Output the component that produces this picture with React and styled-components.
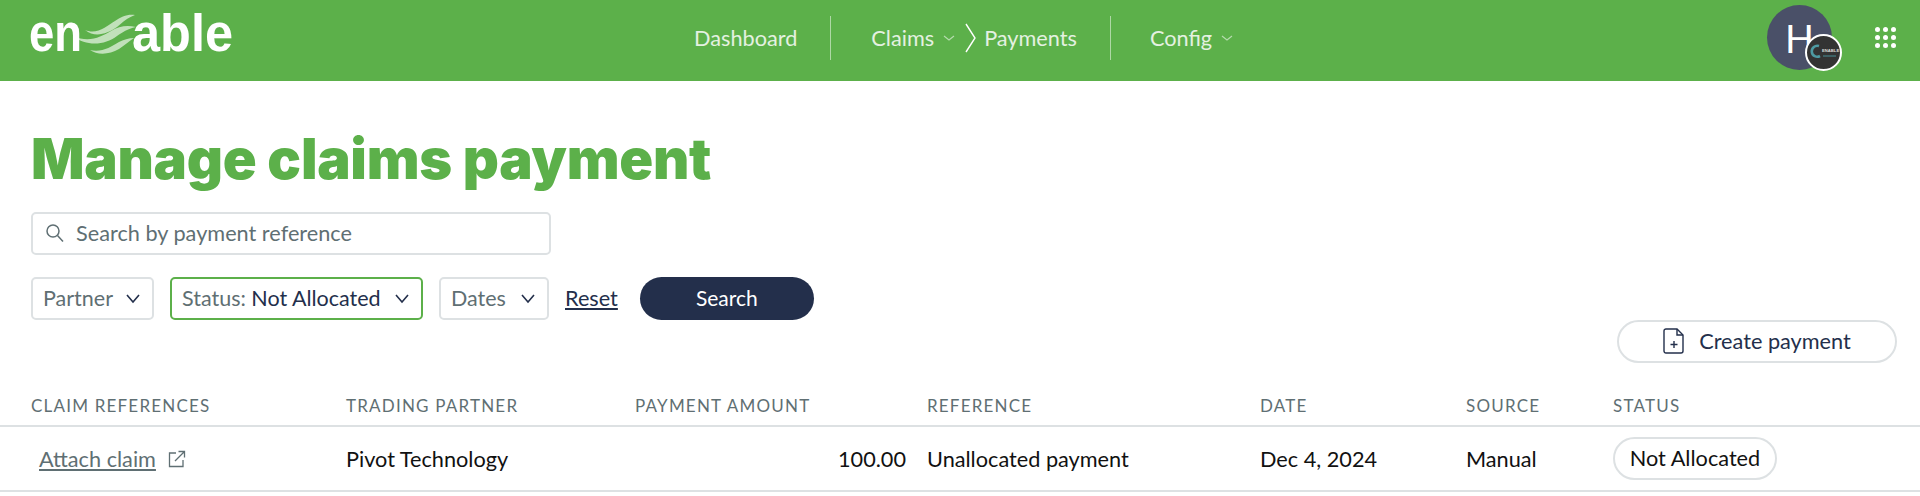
import React from 'react'
import styled, { createGlobalStyle } from 'styled-components'

const GREEN = '#5cb04a'
const NAVY = '#232f4b'
const LINE = '#dde1e3'
const GREY = '#5f6f73'

const Global = createGlobalStyle`
  html, body { margin: 0; padding: 0; background: #fff; }
  body { font-family: Lato, "Liberation Sans", sans-serif; overflow: hidden; }
`

const Header = styled.header`
  height: 81px;
  background: ${GREEN};
  display: flex;
  align-items: center;
  padding-left: 31px;
`
const Logo = styled.svg`
  width: 202px;
  height: 42px;
  margin-top: -14px;
  flex: none;
  overflow: visible;
`
const LogoWord = styled.text`
  font-family: "Liberation Sans", sans-serif;
  font-weight: 700;
  font-size: 51px;
  fill: #fff;
`
const Nav = styled.nav`
  display: flex;
  align-items: center;
  margin-left: 461px;
  margin-top: -6px;
  color: #e4f1e1;
  font-size: 21.7px;
`
const NavItem = styled.span`
  display: flex;
  align-items: center;
`
const NavDivider = styled.span`
  width: 1px;
  height: 44px;
  background: rgba(255, 255, 255, 0.5);
  margin: 0 ${p => p.$right}px 0 ${p => p.$left}px;
`
const NavArrow = styled.svg`
  width: 14px;
  height: 30px;
  margin: 0 6px 0 9px;
  fill: none;
  stroke: #fff;
  stroke-width: 1.4;
`
const RightSide = styled.div`
  margin-left: auto;
  display: flex;
  align-items: center;
  padding-right: 24px;
  margin-top: -6px;
`
const Avatar = styled.div`
  position: relative;
  width: 65px;
  height: 65px;
  border-radius: 50%;
  background: #4a5068;
  color: #fff;
  font-size: 38px;
  display: flex;
  align-items: center;
  justify-content: center;
  margin-right: 43px;
`
const Badge = styled.svg`
  position: absolute;
  left: 38px;
  top: 29px;
  width: 37px;
  height: 37px;
`
const Apps = styled.div`
  display: grid;
  grid-template-columns: repeat(3, 5px);
  gap: 3px;
`
const Dot = styled.i`
  width: 5px;
  height: 5px;
  border-radius: 50%;
  background: #fff;
`
const Main = styled.main`
  padding: 44px 23px 0 31px;
`
const Title = styled.h1`
  margin: 0;
  font-family: Inter, sans-serif;
  font-weight: 900;
  font-size: 56px;
  line-height: 68px;
  letter-spacing: -0.25px;
  color: ${GREEN};
`
const SearchBox = styled.div`
  box-sizing: border-box;
  width: 520px;
  height: 43px;
  margin-top: 19px;
  padding: 0 0 2px 12px;
  border: 2px solid ${LINE};
  border-radius: 5px;
  display: flex;
  align-items: center;
  gap: 11px;
  color: ${GREY};
  font-size: 21.7px;
`
const FilterRow = styled.div`
  display: flex;
  align-items: center;
  margin-top: 22px;
  height: 43px;
`
const Filter = styled.div`
  box-sizing: border-box;
  height: 43px;
  width: ${p => p.$width}px;
  margin-right: 16px;
  padding: 0 10px 2px 10px;
  border: 2px solid ${p => (p.$active ? GREEN : LINE)};
  border-radius: 5px;
  display: flex;
  align-items: center;
  justify-content: space-between;
  color: ${GREY};
  font-size: 21.5px;
  white-space: nowrap;
`
const FilterValue = styled.span`
  color: ${NAVY};
`
const ResetLink = styled.a`
  color: ${NAVY};
  font-size: 21.7px;
  text-decoration: underline;
  margin: -2px 22px 0 0;
`
const SearchButton = styled.button`
  width: 174px;
  height: 43px;
  padding: 0 0 2px;
  border: 0;
  border-radius: 22px;
  background: ${NAVY};
  color: #fff;
  font: inherit;
  font-size: 21px;
`
const ActionRow = styled.div`
  display: flex;
  justify-content: flex-end;
`
const CreateButton = styled.button`
  box-sizing: border-box;
  width: 280px;
  height: 43px;
  padding: 0 0 2px;
  border: 2px solid ${LINE};
  border-radius: 22px;
  background: #fff;
  color: ${NAVY};
  font: inherit;
  font-size: 21.7px;
  display: flex;
  align-items: center;
  justify-content: center;
  gap: 14px;
`
const Row = styled.div`
  display: grid;
  grid-template-columns: 346px 289px 292px 333px 206px 147px 1fr;
  align-items: ${p => p.$align || 'center'};
  height: ${p => p.$height}px;
  padding-bottom: ${p => p.$bottom || 0}px;
  border-bottom: 2px solid ${LINE};
  box-sizing: border-box;
`
const Head = styled.div`
  color: ${GREY};
  font-size: 17px;
  line-height: 20px;
  letter-spacing: 1.2px;
  padding-left: ${p => p.$pad || 0}px;
`
const Cell = styled.div`
  color: #111;
  font-size: 21.7px;
  padding-left: ${p => p.$pad || 0}px;
  text-align: ${p => p.$align || 'left'};
  padding-right: ${p => p.$padRight || 0}px;
`
const AttachLink = styled.a`
  display: inline-flex;
  align-items: center;
  gap: 12px;
  color: ${GREY};
`
const Underlined = styled.span`
  text-decoration: underline;
`
const StatusPill = styled.span`
  display: inline-flex;
  align-items: center;
  justify-content: center;
  box-sizing: border-box;
  width: 164px;
  height: 43px;
  padding-bottom: 2px;
  border: 2px solid ${LINE};
  border-radius: 22px;
`
const NavCaret = styled.svg`
  width: 12px;
  height: 8px;
  margin-left: 9px;
  fill: none;
  stroke: rgba(255, 255, 255, 0.55);
  stroke-width: 1.2;
`

const Caret = ({ size = 18, color = 'currentColor', width = 1.6 }) => (
  <svg width={size} height={size} viewBox="0 0 18 18" fill="none" stroke={color} strokeWidth={width}>
    <path d="M3 6l6 7 6-7" />
  </svg>
)

export default function App() {
  return (
    <>
      <Global />
      <Header>
        <Logo viewBox="0 0 202 42">
          <LogoWord x="-2" y="38" textLength="53" lengthAdjust="spacingAndGlyphs">en</LogoWord>
          <LogoWord x="101" y="38" textLength="101" lengthAdjust="spacingAndGlyphs">able</LogoWord>
          <g fill="#fff" fillOpacity="0.62">
            <path d="M54 17C66 22 76 13 84 8C90 4 96 1 104 2C96 5 92 9 86 14C76 21 64 25 54 17z" />
            <path d="M42 23C58 30 70 24 80 18C88 13 96 12 105 14C96 16 92 19 86 23C74 32 56 34 42 23z" />
            <path d="M59 37C70 40 80 34 88 29C92 27 98 25 103 25C98 28 94 32 88 36C78 42 66 42 59 37z" />
          </g>
        </Logo>
        <Nav>
          <NavItem>Dashboard</NavItem>
          <NavDivider $left={33} $right={40} />
          <NavItem>
            Claims
            <NavCaret viewBox="0 0 12 8"><path d="M1 2l5 4 5-4" /></NavCaret>
          </NavItem>
          <NavArrow viewBox="0 0 14 30"><path d="M2 1l9 14-9 14" /></NavArrow>
          <NavItem>Payments</NavItem>
          <NavDivider $left={33} $right={39} />
          <NavItem>
            Config
            <NavCaret viewBox="0 0 12 8"><path d="M1 2l5 4 5-4" /></NavCaret>
          </NavItem>
        </Nav>
        <RightSide>
          <Avatar>
            H
            <Badge viewBox="0 0 37 37">
              <circle cx="18.5" cy="18.5" r="17.5" fill="#333" stroke="#fff" strokeWidth="2" />
              <path d="M14 12a5.5 5.5 0 1 0 1 10" fill="none" stroke="#4d9aa2" strokeWidth="2.6" />
              <text x="17" y="18" fontSize="4.2" fontWeight="700" fill="#ddd" fontFamily="Liberation Sans">ENABLE</text>
              <path d="M18 22h13" stroke="#4d9aa2" strokeWidth="0.9" />
            </Badge>
          </Avatar>
          <Apps>
            {Array.from({ length: 9 }).map((_, i) => <Dot key={i} />)}
          </Apps>
        </RightSide>
      </Header>
      <Main>
        <Title>Manage claims payment</Title>
        <SearchBox>
          <svg width="20" height="20" viewBox="0 0 20 20" fill="none" stroke={GREY} strokeWidth="1.5">
            <circle cx="8" cy="8" r="6" />
            <path d="M12.5 12.5L18 18.5" />
          </svg>
          Search by payment reference
        </SearchBox>
        <FilterRow>
          <Filter $width={123}>Partner <Caret color={NAVY} /></Filter>
          <Filter $width={253} $active>
            <span>Status: <FilterValue>Not Allocated</FilterValue></span>
            <Caret color={NAVY} />
          </Filter>
          <Filter $width={110}>Dates <Caret color={NAVY} /></Filter>
          <ResetLink>Reset</ResetLink>
          <SearchButton>Search</SearchButton>
        </FilterRow>
        <ActionRow>
          <CreateButton>
            <svg width="22" height="26" viewBox="0 0 22 26" fill="none" stroke={NAVY} strokeWidth="1.4">
              <path d="M3 1h11l6 6v16a2 2 0 0 1-2 2H3a2 2 0 0 1-2-2V3a2 2 0 0 1 2-2z" />
              <path d="M14 1v6h6M11 13v7M7.5 16.5h7" />
            </svg>
            Create payment
          </CreateButton>
        </ActionRow>
      </Main>
      <Row $height={64} $align="end" $bottom={9}>
        <Head $pad={31}>CLAIM REFERENCES</Head>
        <Head>TRADING PARTNER</Head>
        <Head>PAYMENT AMOUNT</Head>
        <Head>REFERENCE</Head>
        <Head>DATE</Head>
        <Head>SOURCE</Head>
        <Head>STATUS</Head>
      </Row>
      <Row $height={65}>
        <Cell $pad={39}>
          <AttachLink>
            <Underlined>Attach claim</Underlined>
            <svg width="18" height="18" viewBox="0 0 18 18" fill="none" stroke={GREY} strokeWidth="1.3">
              <path d="M8 3H1.5v13.5H15V10M10.5 1.5h6v6M16.5 1.5L7 11" />
            </svg>
          </AttachLink>
        </Cell>
        <Cell>Pivot Technology</Cell>
        <Cell $align="right" $padRight={21}>100.00</Cell>
        <Cell>Unallocated payment</Cell>
        <Cell>Dec 4, 2024</Cell>
        <Cell>Manual</Cell>
        <Cell><StatusPill>Not Allocated</StatusPill></Cell>
      </Row>
    </>
  )
}
